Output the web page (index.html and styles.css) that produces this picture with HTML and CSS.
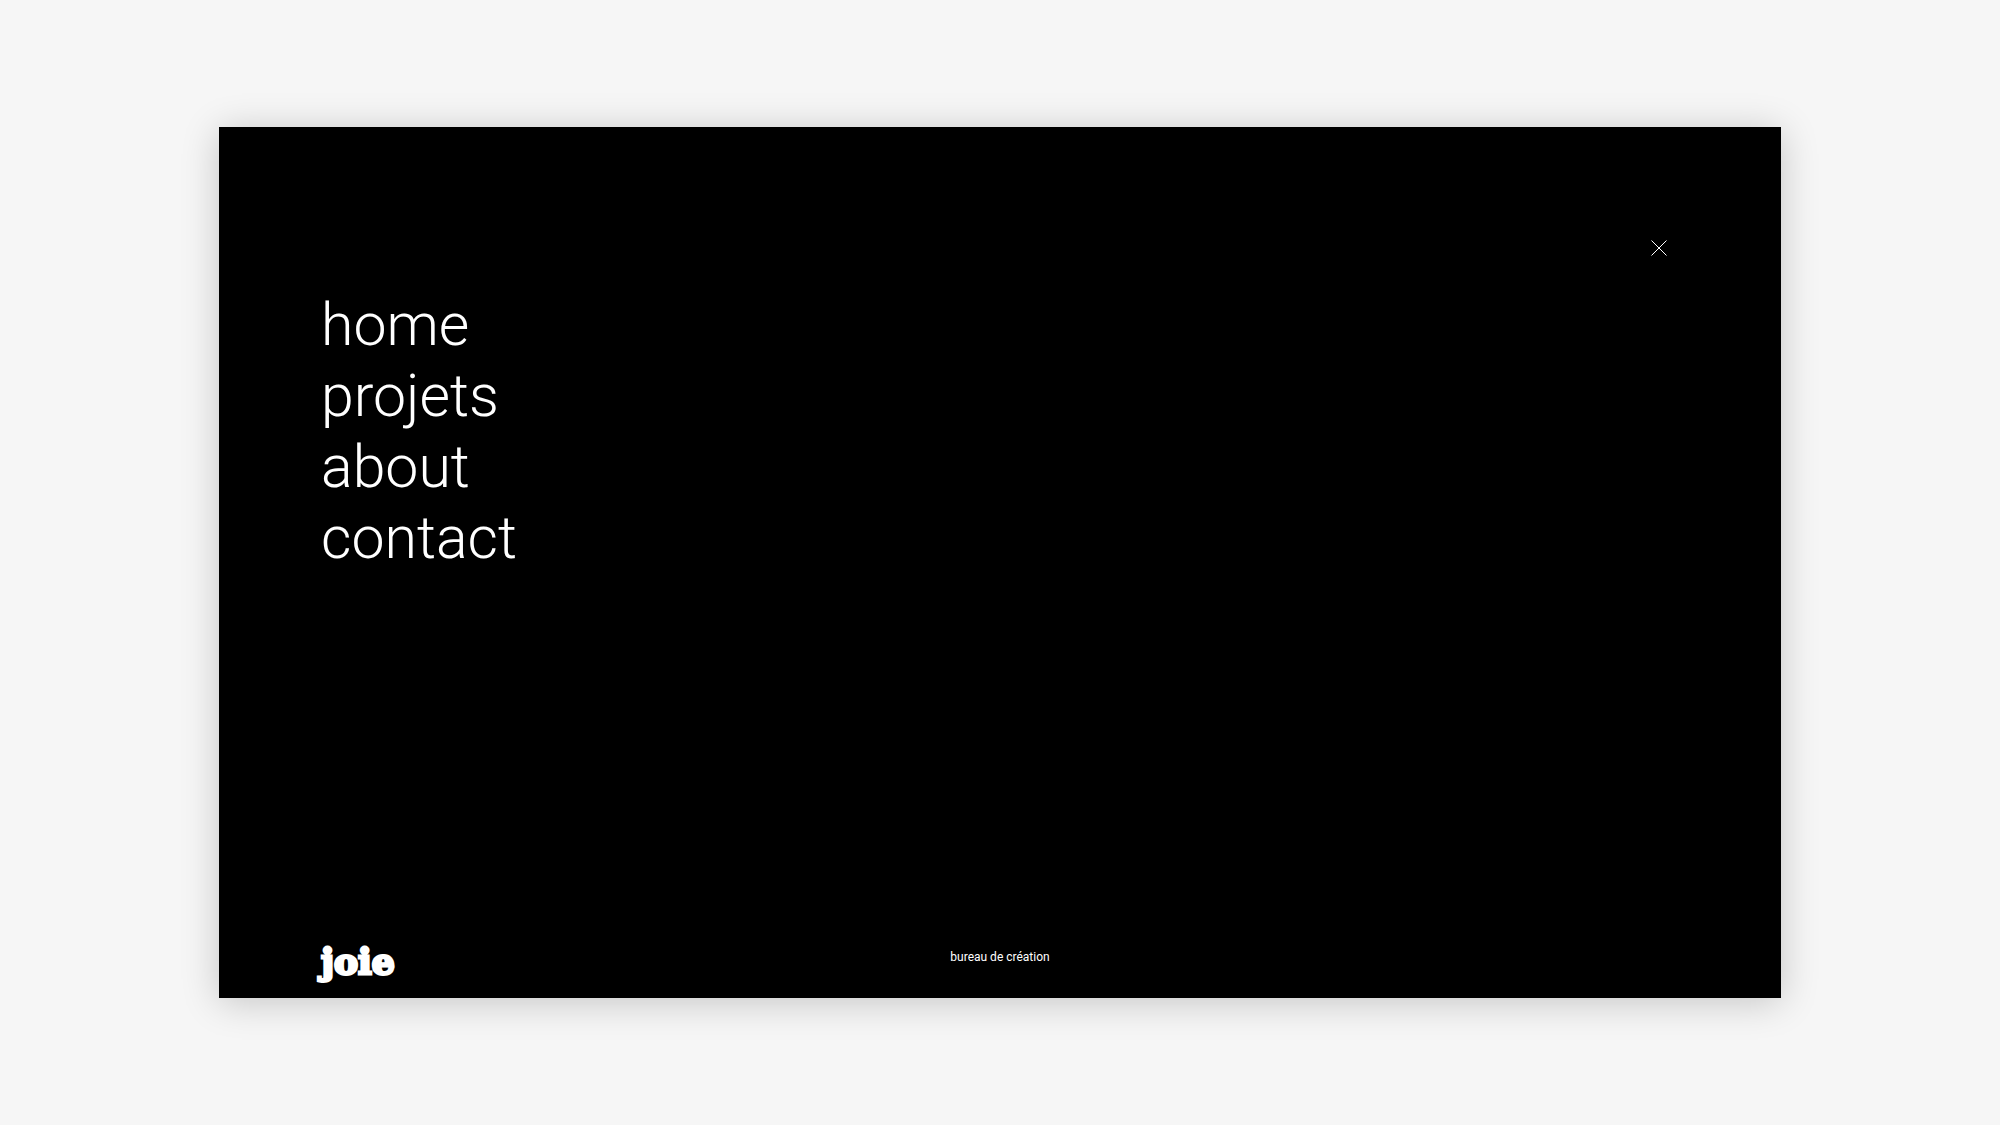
FILE: index.html
```
<!DOCTYPE html>
<html lang="fr">
<head>
<meta charset="utf-8">
<meta name="viewport" content="width=device-width, initial-scale=1">
<title>joie – bureau de création</title>
<link rel="stylesheet" href="styles.css">
</head>
<body>
<main class="panel">
  <header class="top">
    <button class="close" type="button" aria-label="Fermer">
      <svg viewBox="0 0 16 16" width="16" height="16" aria-hidden="true"><path d="M.5.5 15.5 15.5M15.5.5.5 15.5"/></svg>
    </button>
  </header>
  <nav class="menu">
    <a href="#home">home</a>
    <a href="#projets">projets</a>
    <a href="#about">about</a>
    <a href="#contact">contact</a>
  </nav>
  <footer class="bottom">
    <a class="logo" href="#home">joie</a>
    <p class="tagline">bureau de création</p>
  </footer>
</main>
</body>
</html>
```
FILE: styles.css
```
* { box-sizing: border-box; }

body {
  margin: 0;
  min-height: 100vh;
  display: grid;
  place-items: center;
  background: #f6f6f6;
  color: #fff;
  font-family: Roboto, "Liberation Sans", sans-serif;
}

.panel {
  width: 78.1%;
  min-height: 77.4vh;
  display: flex;
  flex-direction: column;
  padding: 105px 102px 18px;
  background: #000;
  box-shadow: 0 4px 36px rgba(0, 0, 0, 0.2);
}

.top {
  display: flex;
  justify-content: flex-end;
}

.close {
  display: grid;
  place-items: center;
  width: 40px;
  height: 32px;
  padding: 0;
  border: 0;
  background: none;
  cursor: pointer;
}

.close path {
  fill: none;
  stroke: #fff;
  stroke-width: 1;
}

.menu {
  display: flex;
  flex-direction: column;
  align-items: flex-start;
  margin-top: 25px;
  font-size: 59px;
  font-weight: 300;
  line-height: 71px;
}

a {
  color: inherit;
  text-decoration: none;
}

.bottom {
  display: grid;
  grid-template-columns: 1fr auto 1fr;
  align-items: start;
  margin-top: auto;
}

.logo {
  font-family: "DejaVu Serif", serif;
  font-size: 36px;
  font-weight: 700;
  line-height: 38px;
  -webkit-text-stroke: 3px #fff;
}

.tagline {
  margin: 7px 0 0;
  font-size: 12px;
  line-height: 16px;
}
```
